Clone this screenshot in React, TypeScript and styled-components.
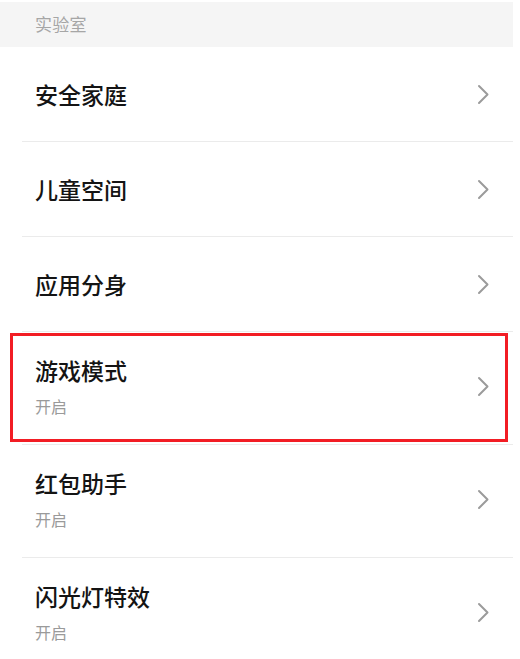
import React from "react";
import styled, { createGlobalStyle } from "styled-components";

const Global = createGlobalStyle`
  html, body { margin: 0; padding: 0; background: #ffffff; }
  body { font-family: "Noto Sans CJK SC", "Noto Sans", sans-serif; }
`;

const Page = styled.div`
  width: 520px;
  height: 659px;
  overflow: hidden;
  background: #ffffff;
  padding-top: 2px;
  box-sizing: border-box;
`;

const SectionHeader = styled.div`
  height: 45px;
  margin-right: 7px;
  background: #f5f5f5;
  display: flex;
  align-items: center;
  padding-left: 35px;
  padding-bottom: 3px;
  box-sizing: border-box;
  font-size: 17px;
  color: #a6a6a6;
  letter-spacing: 0.3px;
`;

const List = styled.div`
  display: flex;
  flex-direction: column;
`;

const Row = styled.div<{ $tall?: boolean }>`
  position: relative;
  display: flex;
  align-items: center;
  justify-content: space-between;
  height: ${(p) => (p.$tall ? 112 : 94)}px;
  padding: 0 30px ${(p) => (p.$tall ? 4 : 0)}px 35px;
  box-sizing: border-box;
`;

const Divider = styled.div`
  height: 1px;
  margin: 0 7px 0 22px;
  background: #ebebeb;
`;

const Texts = styled.div`
  display: flex;
  flex-direction: column;
  gap: 10px;
`;

const Title = styled.div`
  font-size: 23px;
  font-weight: 500;
  color: #141414;
  line-height: 30px;
`;

const Sub = styled.div`
  font-size: 16px;
  color: #9a9a9a;
  line-height: 22px;
`;

const Highlight = styled.span`
  position: absolute;
  top: 1px;
  left: 10px;
  right: 12px;
  bottom: 2px;
  border: 3px solid #f21d24;
  pointer-events: none;
`;

const Chevron = () => (
  <svg width="13" height="21" viewBox="0 0 13 21" fill="none">
    <path
      d="M2 2 L10.5 10.5 L2 19"
      stroke="#9b9b9b"
      strokeWidth="2"
      strokeLinecap="round"
      strokeLinejoin="round"
    />
  </svg>
);

type Item = { title: string; sub?: string; highlight?: boolean };

const items: Item[] = [
  { title: "安全家庭" },
  { title: "儿童空间" },
  { title: "应用分身" },
  { title: "游戏模式", sub: "开启", highlight: true },
  { title: "红包助手", sub: "开启" },
  { title: "闪光灯特效", sub: "开启" },
];

export default function App() {
  return (
    <>
      <Global />
      <Page>
        <SectionHeader>实验室</SectionHeader>
        <List>
          {items.map((it, i) => (
            <React.Fragment key={it.title}>
              <Row $tall={!!it.sub}>
                <Texts>
                  <Title>{it.title}</Title>
                  {it.sub && <Sub>{it.sub}</Sub>}
                </Texts>
                <Chevron />
                {it.highlight && <Highlight />}
              </Row>
              {i < items.length - 1 && <Divider />}
            </React.Fragment>
          ))}
        </List>
      </Page>
    </>
  );
}
